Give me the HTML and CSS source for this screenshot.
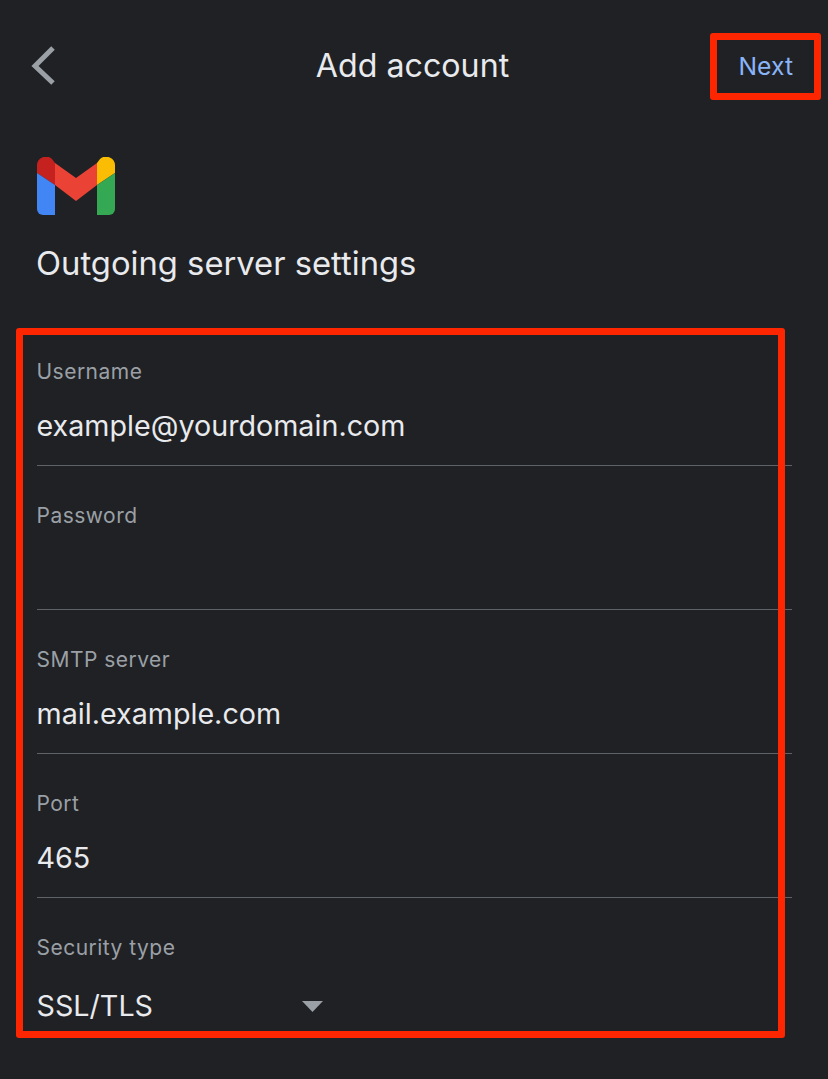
FILE: index.html
```html
<!DOCTYPE html>
<html lang="en">
<head>
<meta charset="utf-8">
<title>Add account</title>
<link rel="stylesheet" href="styles.css">
</head>
<body>
<main class="screen">
  <header class="topbar">
    <svg class="back" width="28" height="44" viewBox="0 0 28 44" aria-hidden="true"><polyline points="23,4 5,22 23,39" fill="none" stroke="#9aa0a6" stroke-width="5"/></svg>
    <h1 class="title">Add account</h1>
    <span class="next">Next</span>
  </header>
  <section class="intro">
    <svg class="logo" width="78" height="58" viewBox="0 0 78 58" aria-hidden="true">
      <path d="M18 6 39 21 60 6V28L39 44 18 28Z" fill="#ea4335"/>
      <path d="M0 16V9A9 9 0 0 1 15 2L18 6V28Z" fill="#c5221f"/>
      <path d="M78 16V9A9 9 0 0 0 63 2L60 6V28Z" fill="#fbbc04"/>
      <path d="M0 16 18 28V58H6A6 6 0 0 1 0 52Z" fill="#4285f4"/>
      <path d="M78 16 60 28V58H72A6 6 0 0 0 78 52Z" fill="#34a853"/>
    </svg>
    <h2 class="subtitle">Outgoing server settings</h2>
  </section>
  <form class="fields">
    <div class="field"><span class="label">Username</span><span class="value">example@yourdomain.com</span></div>
    <div class="field"><span class="label">Password</span><span class="value"></span></div>
    <div class="field"><span class="label">SMTP server</span><span class="value">mail.example.com</span></div>
    <div class="field"><span class="label">Port</span><span class="value">465</span></div>
    <div class="field field-select"><span class="label">Security type</span>
      <div class="select"><span class="value">SSL/TLS</span><svg class="caret" width="21" height="11" viewBox="0 0 21 11" aria-hidden="true"><path d="M0 0H21L10.500 11Z" fill="#9aa0a6"/></svg></div>
    </div>
  </form>
  <div class="mark mark-next"></div>
  <div class="mark mark-form"></div>
</main>
</body>
</html>
```
FILE: styles.css
```css
* { box-sizing: border-box; }
html, body { margin: 0; padding: 0; }
body {
  background: #202124;
  font-family: Inter, "Noto Sans", sans-serif;
  color: #e8eaed;
}
.screen {
  position: relative;
  width: 828px;
  height: 1079px;
  overflow: hidden;
}
.topbar {
  display: grid;
  grid-template-columns: 1fr auto 1fr;
  align-items: center;
  height: 132px;
  padding: 0 35px 0 30px;
}
.back { flex: none; }
.title {
  margin: 0 0 2px 2px;
  font-size: 32.200px;
  font-weight: 400;
  color: #e8eaed;
}
.next {
  justify-self: end;
  font-size: 24.700px;
  color: #8ab4f8;
}
.intro { padding: 25px 36px 0 37px; }
.logo { display: block; }
.subtitle {
  margin: 28px 0 0 -1px;
  font-size: 32.750px;
  line-height: 40px;
  font-weight: 400;
  color: #e8eaed;
}
.fields {
  margin-top: 39px;
  padding: 0 36px 0 37px;
}
.field {
  display: flex;
  flex-direction: column;
  height: 144px;
  padding-top: 36px;
  border-bottom: 1px solid #5f6368;
}
.field-select { border-bottom: 0; }
.label {
  height: 28px;
  margin-left: -0.500px;
  font-size: 21px;
  line-height: 28px;
  letter-spacing: 0.480px;
  color: #9aa0a6;
}
.value {
  margin-top: 18px;
  margin-left: -0.500px;
  height: 44px;
  font-size: 28.700px;
  line-height: 44px;
  color: #e8eaed;
}
.select {
  display: flex;
  align-items: center;
  justify-content: space-between;
  width: 285.500px;
}
.select .value { margin-top: 22px; }
.caret { margin-top: 22px; }
.mark {
  position: absolute;
  border: 7px solid #fe2600;
  border-radius: 3px;
}
.mark-next { left: 710px; top: 33px; width: 111px; height: 67px; }
.mark-form { left: 16px; top: 328px; width: 769px; height: 710px; }
```
